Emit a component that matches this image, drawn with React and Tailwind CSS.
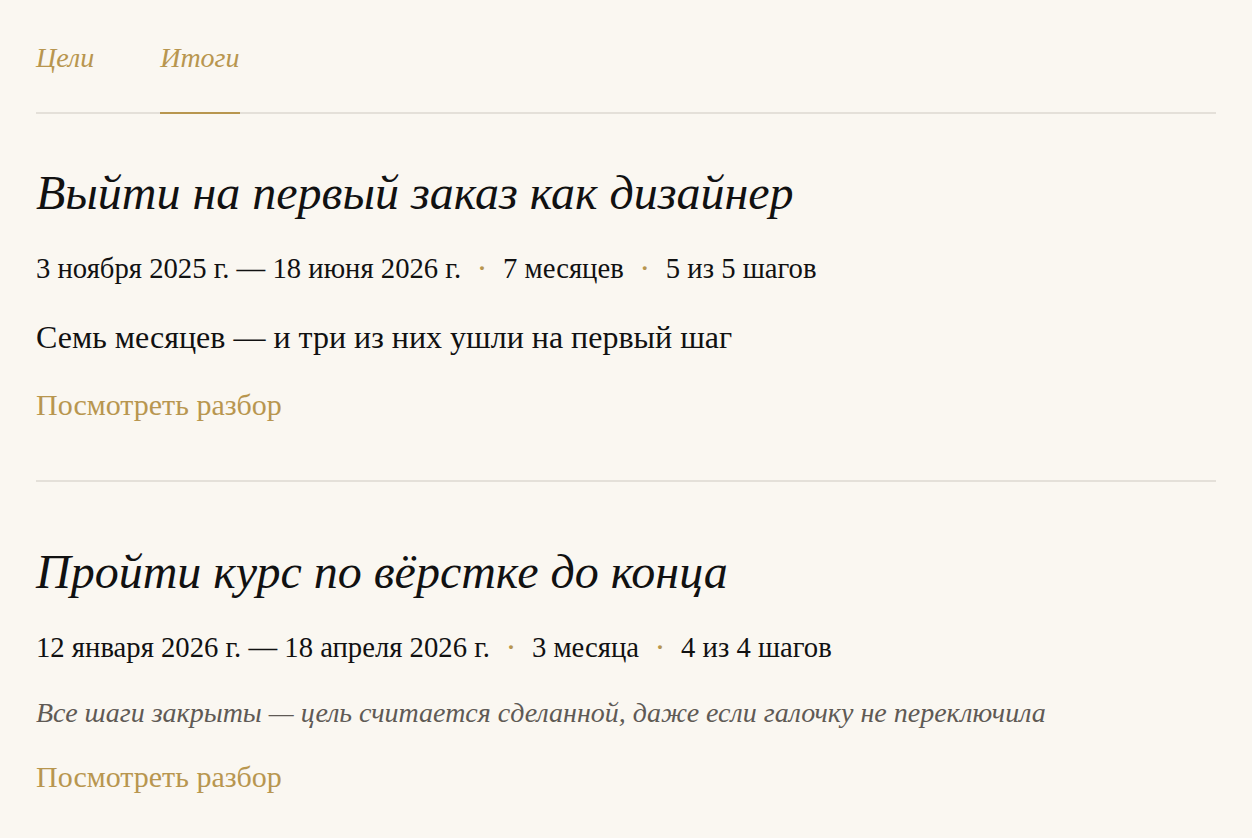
import React, { useState } from 'react';

const serif = { fontFamily: '"Liberation Serif", "DejaVu Serif", serif' };

const results = [
  {
    title: 'Выйти на первый заказ как дизайнер',
    range: '3 ноября 2025 г. — 18 июня 2026 г.',
    duration: '7 месяцев',
    steps: '5 из 5 шагов',
    summary: 'Семь месяцев — и три из них ушли на первый шаг',
    note: false,
  },
  {
    title: 'Пройти курс по вёрстке до конца',
    range: '12 января 2026 г. — 18 апреля 2026 г.',
    duration: '3 месяца',
    steps: '4 из 4 шагов',
    summary: 'Все шаги закрыты — цель считается сделанной, даже если галочку не переключила',
    note: true,
  },
];

const Dot = () => <span className="mx-[17px] text-[#b8964f] text-[24px] font-bold">·</span>;

const ResultItem = ({ item, first }) => (
  <article className={first ? 'pt-[49px] pb-[58px] border-b-2 border-[#e4e0d9]' : 'pt-[60px] pb-10'}>
    <h2 className="text-[48px] leading-[60px] italic text-[#111]">{item.title}</h2>
    <div className="mt-[29px] flex items-center text-[28.7px] leading-[32px] text-[#111]">
      <span>{item.range}</span>
      <Dot />
      <span>{item.duration}</span>
      <Dot />
      <span>{item.steps}</span>
    </div>
    {item.note ? (
      <p className="mt-[34px] text-[28px] leading-[32px] italic text-[#5f5a55]">{item.summary}</p>
    ) : (
      <p className="mt-[36px] text-[32px] leading-[34px] text-[#111]">{item.summary}</p>
    )}
    <a href="#" className={`block ${item.note ? 'mt-[31px]' : 'mt-[34px]'} text-[30px] leading-[34px] text-[#b8964f]`}>
      Посмотреть разбор
    </a>
  </article>
);

export default function App() {
  const [tab, setTab] = useState('results');
  return (
    <div className="min-h-screen bg-[#faf7f1] px-9 pt-6" style={serif}>
      <nav className="flex gap-[66px] border-b-2 border-[#e4e0d9]">
        <button
          onClick={() => setTab('goals')}
          className={`-mb-[2px] pt-[17px] pb-[37px] text-[28px] leading-[34px] italic text-[#b8964f] border-b-2 ${tab === 'goals' ? 'border-[#b8964f]' : 'border-transparent'}`}
        >
          Цели
        </button>
        <button
          onClick={() => setTab('results')}
          className={`-mb-[2px] pt-[17px] pb-[37px] text-[28px] leading-[34px] italic text-[#b8964f] border-b-2 ${tab === 'results' ? 'border-[#b8964f]' : 'border-transparent'}`}
        >
          Итоги
        </button>
      </nav>
      {results.map((item, i) => (
        <ResultItem key={i} item={item} first={i === 0} />
      ))}
    </div>
  );
}
